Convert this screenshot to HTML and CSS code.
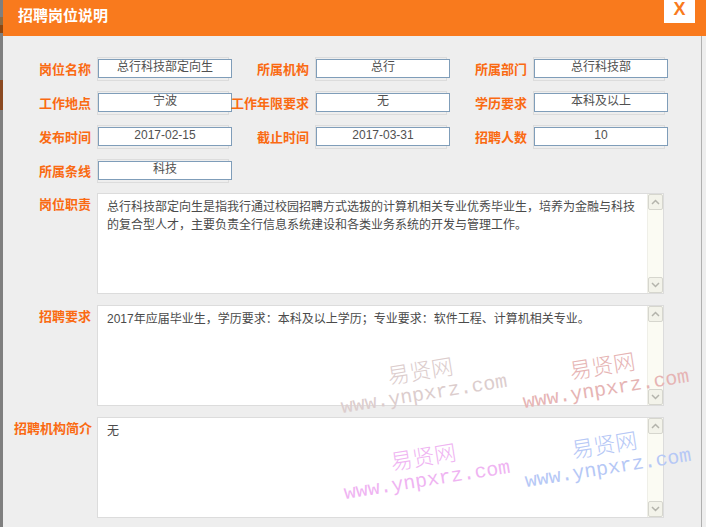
FILE: index.html
```html
<!DOCTYPE html>
<html lang="zh-CN">
<head>
<meta charset="utf-8">
<title>招聘岗位说明</title>
<link rel="stylesheet" href="styles.css">
</head>
<body>
<div class="edge"></div>
<div class="dialog">
  <div class="header">
    <h1 class="title">招聘岗位说明</h1>
    <div class="close">X</div>
  </div>
  <div class="content">
    <div class="fields">
      <div class="lbl">岗位名称</div><div class="box"><div class="inp">总行科技部定向生</div></div>
      <div class="lbl">所属机构</div><div class="box"><div class="inp">总行</div></div>
      <div class="lbl">所属部门</div><div class="box"><div class="inp">总行科技部</div></div>

      <div class="lbl">工作地点</div><div class="box"><div class="inp">宁波</div></div>
      <div class="lbl">工作年限要求</div><div class="box"><div class="inp">无</div></div>
      <div class="lbl">学历要求</div><div class="box"><div class="inp">本科及以上</div></div>

      <div class="lbl">发布时间</div><div class="box"><div class="inp">2017-02-15</div></div>
      <div class="lbl">截止时间</div><div class="box"><div class="inp">2017-03-31</div></div>
      <div class="lbl">招聘人数</div><div class="box"><div class="inp">10</div></div>

      <div class="lbl">所属条线</div><div class="box"><div class="inp">科技</div></div>
    </div>

    <div class="areas">
      <div class="area-row">
        <div class="lbl area-lbl">岗位职责</div>
        <div class="area">
          <div class="area-text">总行科技部定向生是指我行通过校园招聘方式选拔的计算机相关专业优秀毕业生，培养为金融与科技的复合型人才，主要负责全行信息系统建设和各类业务系统的开发与管理工作。</div>
          <div class="scroll">
            <span class="btn"><svg width="9" height="6" viewBox="0 0 9 6"><polyline points="1,5 4.5,1.5 8,5" fill="none" stroke="#b4b4ac" stroke-width="1.5"/></svg></span>
            <span class="btn"><svg width="9" height="6" viewBox="0 0 9 6"><polyline points="1,1 4.5,4.5 8,1" fill="none" stroke="#b4b4ac" stroke-width="1.5"/></svg></span>
          </div>
        </div>
      </div>
      <div class="area-row">
        <div class="lbl area-lbl">招聘要求</div>
        <div class="area">
          <div class="area-text">2017年应届毕业生，学历要求：本科及以上学历；专业要求：软件工程、计算机相关专业。</div>
          <div class="scroll">
            <span class="btn"><svg width="9" height="6" viewBox="0 0 9 6"><polyline points="1,5 4.5,1.5 8,5" fill="none" stroke="#b4b4ac" stroke-width="1.5"/></svg></span>
            <span class="btn"><svg width="9" height="6" viewBox="0 0 9 6"><polyline points="1,1 4.5,4.5 8,1" fill="none" stroke="#b4b4ac" stroke-width="1.5"/></svg></span>
          </div>
        </div>
      </div>
      <div class="area-row">
        <div class="lbl area-lbl">招聘机构简介</div>
        <div class="area">
          <div class="area-text">无</div>
          <div class="scroll">
            <span class="btn"><svg width="9" height="6" viewBox="0 0 9 6"><polyline points="1,5 4.5,1.5 8,5" fill="none" stroke="#b4b4ac" stroke-width="1.5"/></svg></span>
            <span class="btn"><svg width="9" height="6" viewBox="0 0 9 6"><polyline points="1,1 4.5,4.5 8,1" fill="none" stroke="#b4b4ac" stroke-width="1.5"/></svg></span>
          </div>
        </div>
      </div>
    </div>
  </div>
</div>

<div class="wm wm1"><span class="cn">易贤网</span><span class="url">www.ynpxrz.com</span></div>
<div class="wm wm2"><span class="cn">易贤网</span><span class="url">www.ynpxrz.com</span></div>
<div class="wm wm3"><span class="cn">易贤网</span><span class="url">www.ynpxrz.com</span></div>
<div class="wm wm4"><span class="cn">易贤网</span><span class="url">www.ynpxrz.com</span></div>
</body>
</html>
```

FILE: styles.css
```css
html, body {
  margin: 0;
  padding: 0;
}

body {
  position: relative;
  display: flex;
  height: 527px;
  overflow: hidden;
  background: #eeeeee;
  font-family: "Liberation Sans", "Noto Sans CJK SC", sans-serif;
}

.edge {
  flex: none;
  width: 3px;
  background: linear-gradient(to bottom,
    #7f7f7f 0, #7f7f7f 17px,
    #8c6b44 17px, #8c6b44 25px,
    #8b4712 25px, #8b4712 33px,
    #7f7f7f 33px, #7f7f7f 80px,
    #8b4a22 80px, #8b4a22 110px,
    #7f7f7f 110px);
}

.dialog {
  flex: 1;
  display: flex;
  flex-direction: column;
}

.header {
  flex: none;
  height: 36px;
  display: flex;
  align-items: flex-start;
  background: #f97a1d;
}

.title {
  margin: 0;
  padding-left: 15px;
  font-size: 15px;
  font-weight: bold;
  line-height: 31px;
  color: #ffffff;
}

.close {
  margin-left: auto;
  margin-right: 11px;
  width: 31px;
  height: 23px;
  background: #ffffff;
  color: #f97a1d;
  font-family: "Liberation Sans", sans-serif;
  font-size: 18px;
  font-weight: bold;
  line-height: 18px;
  text-align: center;
}

.content {
  flex: 1;
  padding: 21px 0 0 11px;
  margin-right: 4px;
  border-right: 1px solid #b0b0b0;
}

.fields {
  display: grid;
  grid-template-columns: 83px 134px 84px 134px 84px 134px;
  row-gap: 10px;
  align-items: center;
}

.lbl {
  padding-right: 6px;
  text-align: right;
  white-space: nowrap;
  color: #fa6a12;
  font-size: 13px;
  font-weight: bold;
  line-height: 17px;
}

.box {
  width: 130px;
  height: 22px;
  border: 1px solid #dcdcdc;
}

.inp {
  margin-top: 1px;
  width: 132px;
  height: 17px;
  border: 1px solid #7f9db9;
  background: #ffffff;
  color: #505050;
  font-size: 12px;
  line-height: 15px;
  text-align: center;
  white-space: nowrap;
}

.areas {
  margin-top: 10px;
  display: flex;
  flex-direction: column;
  gap: 11px;
}

.area-row {
  display: grid;
  grid-template-columns: 83px 567px;
  align-items: start;
}

.area-lbl {
  padding-top: 3px;
}

.area {
  height: 99px;
  display: flex;
  border: 1px solid #dcdcdc;
  background: #ffffff;
}

.area-text {
  flex: 1;
  padding: 4px 9px;
  color: #4a4a4a;
  font-size: 12px;
  line-height: 18px;
}

.scroll {
  flex: none;
  width: 15px;
  display: flex;
  flex-direction: column;
  justify-content: space-between;
  border-left: 1px solid #efefe8;
  background: #fbfbf3;
}

.btn {
  height: 14px;
  display: flex;
  align-items: center;
  justify-content: center;
  border: 1px solid #d6d6ce;
  border-radius: 2px;
  background: #f3f3ea;
}

.wm {
  position: absolute;
  width: 180px;
  text-align: center;
  transform: rotate(-9deg);
  pointer-events: none;
}

.wm .cn {
  display: block;
  font-family: "Noto Sans CJK SC", sans-serif;
  font-size: 22px;
  font-weight: 300;
  line-height: 28px;
}

.wm .url {
  display: block;
  font-family: "Liberation Mono", monospace;
  font-size: 20px;
  line-height: 24px;
}

.wm1 { left: 332px; top: 355px; color: #dccdcd; }
.wm2 { left: 514px; top: 350px; color: #e6b4b4; }
.wm3 { left: 335px; top: 441px; color: #efb4f2; }
.wm4 { left: 516px; top: 429px; color: #b6c8f6; }
```
